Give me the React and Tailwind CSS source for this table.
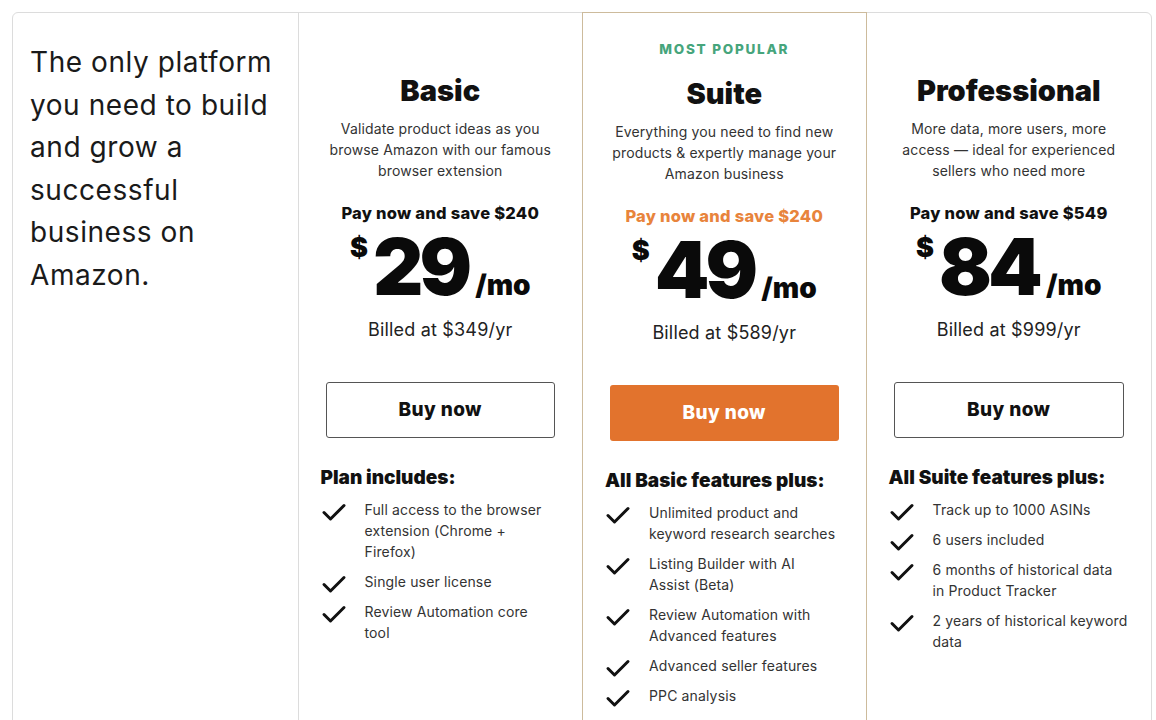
import React from 'react'

const plans = [
  {
    name: 'Basic',
    desc: ['Validate product ideas as you', 'browse Amazon with our famous', 'browser extension'],
    save: 'Pay now and save $240',
    price: '29',
    billed: 'Billed at $349/yr',
    heading: 'Plan includes:',
    features: [
      ['Full access to the browser', 'extension (Chrome +', 'Firefox)'],
      ['Single user license'],
      ['Review Automation core', 'tool'],
    ],
  },
  {
    name: 'Suite',
    popular: true,
    desc: ['Everything you need to find new', 'products & expertly manage your', 'Amazon business'],
    save: 'Pay now and save $240',
    price: '49',
    billed: 'Billed at $589/yr',
    heading: 'All Basic features plus:',
    features: [
      ['Unlimited product and', 'keyword research searches'],
      ['Listing Builder with AI', 'Assist (Beta)'],
      ['Review Automation with', 'Advanced features'],
      ['Advanced seller features'],
      ['PPC analysis'],
    ],
  },
  {
    name: 'Professional',
    desc: ['More data, more users, more', 'access — ideal for experienced', 'sellers who need more'],
    save: 'Pay now and save $549',
    price: '84',
    billed: 'Billed at $999/yr',
    heading: 'All Suite features plus:',
    features: [
      ['Track up to 1000 ASINs'],
      ['6 users included'],
      ['6 months of historical data', 'in Product Tracker'],
      ['2 years of historical keyword', 'data'],
    ],
  },
]

function Check() {
  return (
    <svg width="24" height="18" viewBox="0 0 24 18" className="block mt-[4px] overflow-visible">
      <path d="M2 9.5 L8.5 16 L22 2.5" fill="none" stroke="#111" strokeWidth="3" strokeLinecap="round" strokeLinejoin="round" />
    </svg>
  )
}

function PlanColumn({ plan }) {
  const popular = plan.popular
  return (
    <div
      className={
        popular
          ? 'relative -mt-px border-x border-t border-[#cdbb9c] pt-[28px] pb-10'
          : 'pt-[60px] pb-10'
      }
    >
      {popular && (
        <div className="text-center text-[13.5px] leading-4 font-extrabold tracking-[0.13em] text-[#46a57c] mb-[19px]">
          MOST POPULAR
        </div>
      )}
      <h2 className="text-center text-[29px] leading-9 font-black text-[#111]">{plan.name}</h2>
      <p className="mt-[9px] text-center text-[14px] leading-[21px] tracking-[0.01em] text-[#333]">
        {plan.desc.map((l, i) => (
          <span key={i} className="block">{l}</span>
        ))}
      </p>
      <div
        className={
          'mt-[22px] text-center text-[16.5px] leading-[20px] tracking-[0.015em] font-extrabold ' +
          (popular ? 'text-[#e8843c]' : 'text-[#111]')
        }
      >
        {plan.save}
      </div>
      <div className="mt-[6px] flex justify-center items-baseline text-[#0a0a0a] h-[76px]">
        <span className="self-start mt-[5px] text-[27px] leading-none font-black">$</span>
        <span className="ml-[5px] text-[78px] leading-[76px] font-black tracking-[-0.05em]">{plan.price}</span>
        <span className="ml-[7px] text-[28px] leading-none font-black">/mo</span>
      </div>
      <div className="mt-[11px] text-center text-[18px] leading-[27px] tracking-[0.01em] text-[#222]">{plan.billed}</div>
      <div className="mt-[39px] px-[27px]">
        <button
          className={
            popular
              ? 'w-full h-[56px] rounded-[3px] bg-[#e2732d] text-white text-[19px] tracking-[0.02em] font-extrabold'
              : 'w-full h-[56px] rounded-[3px] border border-[#555] bg-white text-[#111] text-[19px] tracking-[0.02em] font-extrabold'
          }
        >
          Buy now
        </button>
      </div>
      <div className="mt-[28px] px-[22px]">
        <h3 className="text-[19px] leading-6 font-black text-[#111]">{plan.heading}</h3>
        <ul className="mt-[9px] flex flex-col gap-[9px]">
          {plan.features.map((f, i) => (
            <li key={i} className="flex">
              <div className="w-[44px] h-[21px] pl-[1px] shrink-0">
                <Check />
              </div>
              <div className="text-[14px] leading-[21px] tracking-[0.01em] text-[#333]">
                {f.map((l, j) => (
                  <span key={j} className="block whitespace-nowrap">{l}</span>
                ))}
              </div>
            </li>
          ))}
        </ul>
      </div>
    </div>
  )
}

export default function App() {
  return (
    <div className="h-screen overflow-hidden bg-white pt-[12px] pl-[12px] pr-[4px] font-['Inter',sans-serif]">
      <div className="grid grid-cols-4 border border-[#dcdcdc] rounded-[6px] min-h-[760px]">
        <div className="pl-[17px] pt-[28px]">
          <p className="text-[28px] leading-[42.5px] tracking-[0.02em] text-[#1a1a1a]">
            <span className="block">The only platform</span>
            <span className="block">you need to build</span>
            <span className="block">and grow a</span>
            <span className="block">successful</span>
            <span className="block">business on</span>
            <span className="block">Amazon.</span>
          </p>
        </div>
        <div className="border-l border-[#dcdcdc]">
          <PlanColumn plan={plans[0]} />
        </div>
        <PlanColumn plan={plans[1]} />
        <PlanColumn plan={plans[2]} />
      </div>
    </div>
  )
}
